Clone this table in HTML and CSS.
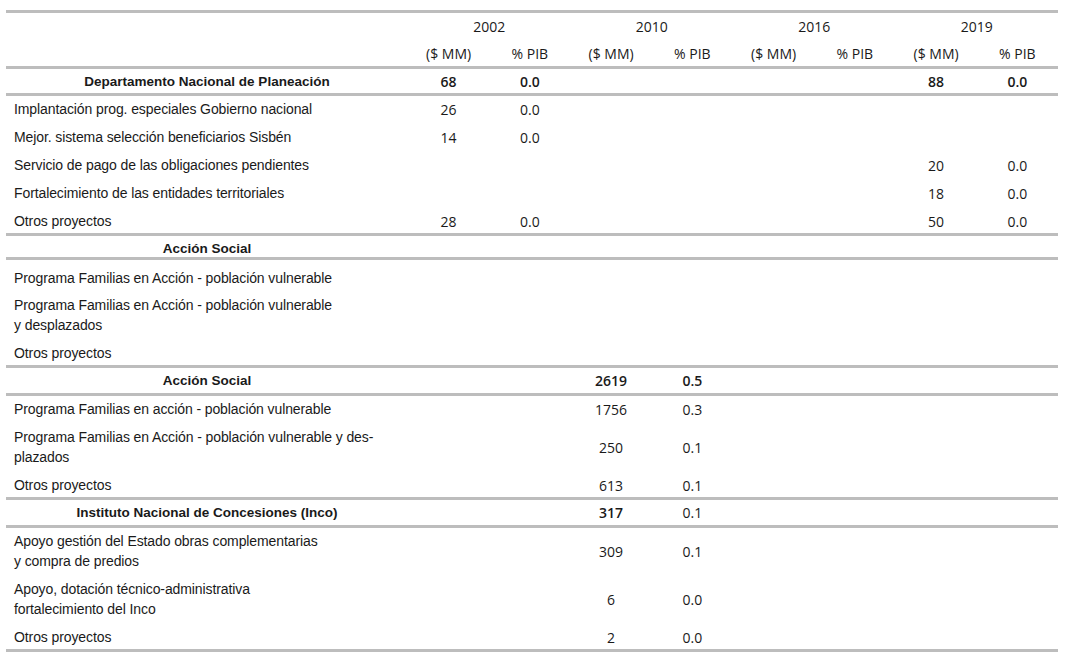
FILE: index.html
```html
<!DOCTYPE html>
<html lang="es">
<head>
<meta charset="utf-8">
<title>Proyectos de inversión</title>
<link rel="stylesheet" href="styles.css">
</head>
<body>
<div class="tbl">
  <div class="thead">
    <div class="row years">
      <div></div>
      <div class="yr">2002</div>
      <div class="yr">2010</div>
      <div class="yr">2016</div>
      <div class="yr">2019</div>
    </div>
    <div class="row units">
      <div></div>
      <div class="num">($ MM)</div><div class="num">% PIB</div>
      <div class="num">($ MM)</div><div class="num">% PIB</div>
      <div class="num">($ MM)</div><div class="num">% PIB</div>
      <div class="num">($ MM)</div><div class="num">% PIB</div>
    </div>
  </div>

  <section class="sec">
    <div class="row sec-head tight">
      <div class="title">Departamento Nacional de Planeación</div>
      <div class="num b">68</div><div class="num b">0.0</div>
      <div class="num"></div><div class="num"></div>
      <div class="num"></div><div class="num"></div>
      <div class="num b">88</div><div class="num b">0.0</div>
    </div>
    <div class="row item">
      <div class="label">Implantación prog. especiales Gobierno nacional</div>
      <div class="num">26</div><div class="num">0.0</div>
      <div class="num"></div><div class="num"></div>
      <div class="num"></div><div class="num"></div>
      <div class="num"></div><div class="num"></div>
    </div>
    <div class="row item">
      <div class="label">Mejor. sistema selección beneficiarios Sisbén</div>
      <div class="num">14</div><div class="num">0.0</div>
      <div class="num"></div><div class="num"></div>
      <div class="num"></div><div class="num"></div>
      <div class="num"></div><div class="num"></div>
    </div>
    <div class="row item">
      <div class="label">Servicio de pago de las obligaciones pendientes</div>
      <div class="num"></div><div class="num"></div>
      <div class="num"></div><div class="num"></div>
      <div class="num"></div><div class="num"></div>
      <div class="num">20</div><div class="num">0.0</div>
    </div>
    <div class="row item">
      <div class="label">Fortalecimiento de las entidades territoriales</div>
      <div class="num"></div><div class="num"></div>
      <div class="num"></div><div class="num"></div>
      <div class="num"></div><div class="num"></div>
      <div class="num">18</div><div class="num">0.0</div>
    </div>
    <div class="row item">
      <div class="label">Otros proyectos</div>
      <div class="num">28</div><div class="num">0.0</div>
      <div class="num"></div><div class="num"></div>
      <div class="num"></div><div class="num"></div>
      <div class="num">50</div><div class="num">0.0</div>
    </div>
  </section>

  <section class="sec">
    <div class="row sec-head compact">
      <div class="title">Acción Social</div>
    </div>
    <div class="row item loose">
      <div class="label">Programa Familias en Acción - población vulnerable</div>
    </div>
    <div class="row item">
      <div class="label">Programa Familias en Acción - población vulnerable<br>y desplazados</div>
    </div>
    <div class="row item">
      <div class="label">Otros proyectos</div>
    </div>
  </section>

  <section class="sec">
    <div class="row sec-head">
      <div class="title">Acción Social</div>
      <div class="num"></div><div class="num"></div>
      <div class="num b">2619</div><div class="num b">0.5</div>
    </div>
    <div class="row item">
      <div class="label">Programa Familias en acción - población vulnerable</div>
      <div class="num"></div><div class="num"></div>
      <div class="num">1756</div><div class="num">0.3</div>
    </div>
    <div class="row item">
      <div class="label">Programa Familias en Acción - población vulnerable y des-<br>plazados</div>
      <div class="num"></div><div class="num"></div>
      <div class="num">250</div><div class="num">0.1</div>
    </div>
    <div class="row item">
      <div class="label">Otros proyectos</div>
      <div class="num"></div><div class="num"></div>
      <div class="num">613</div><div class="num">0.1</div>
    </div>
  </section>

  <section class="sec">
    <div class="row sec-head">
      <div class="title">Instituto Nacional de Concesiones (Inco)</div>
      <div class="num"></div><div class="num"></div>
      <div class="num b">317</div><div class="num">0.1</div>
    </div>
    <div class="row item">
      <div class="label">Apoyo gestión del Estado obras complementarias<br>y compra de predios</div>
      <div class="num"></div><div class="num"></div>
      <div class="num">309</div><div class="num">0.1</div>
    </div>
    <div class="row item">
      <div class="label">Apoyo, dotación técnico-administrativa<br>fortalecimiento del Inco</div>
      <div class="num"></div><div class="num"></div>
      <div class="num">6</div><div class="num">0.0</div>
    </div>
    <div class="row item">
      <div class="label">Otros proyectos</div>
      <div class="num"></div><div class="num"></div>
      <div class="num">2</div><div class="num">0.0</div>
    </div>
  </section>
</div>
</body>
</html>
```

FILE: styles.css
```css
html, body {
  margin: 0;
  padding: 0;
  background: #ffffff;
}

body {
  color: #1a1a1a;
  font-family: "Liberation Sans", Arial, sans-serif;
}

.tbl {
  width: 1052px;
  margin: 10px 0 0 6px;
  border-top: 3px solid #bdbdbd;
}

.thead {
  border-bottom: 3px solid #bdbdbd;
}

.sec {
  border-bottom: 3px solid #bdbdbd;
}

.row {
  display: grid;
  grid-template-columns: 402px repeat(8, 81.25px);
  align-items: center;
}

.years {
  height: 27px;
  grid-template-columns: 402px repeat(4, 162.5px);
}

.units {
  height: 26px;
}

.yr,
.num {
  font-family: "Open Sans", "Noto Sans", sans-serif;
  font-size: 14px;
  line-height: 17px;
  text-align: center;
  color: #1a1a1a;
}

.num.b {
  font-weight: 600;
}

.sec-head {
  padding: 4px 0 4px;
  border-bottom: 3px solid #bdbdbd;
}

.sec-head.tight {
  padding-bottom: 3px;
}

.sec-head.compact {
  padding-bottom: 0;
}

.title {
  font-size: 13.5px;
  font-weight: bold;
  line-height: 17px;
  text-align: center;
}

.item {
  padding: 3px 0 5px;
}

.item:last-child {
  padding-bottom: 2px;
}

.item.loose {
  padding-top: 8px;
  padding-bottom: 4px;
}

.label {
  padding-left: 8px;
  font-size: 14px;
  line-height: 20px;
  letter-spacing: -0.1px;
}
```
